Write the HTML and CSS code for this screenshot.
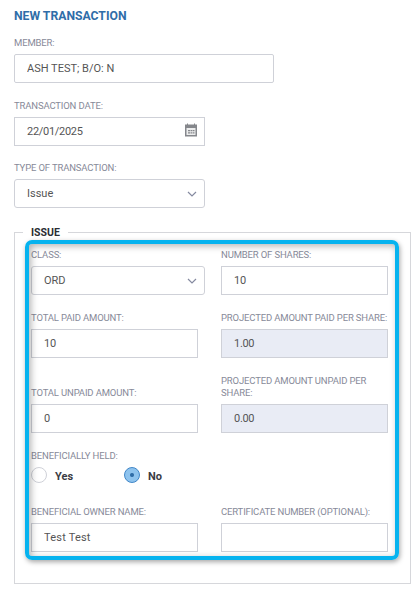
FILE: index.html
```html
<!DOCTYPE html>
<html lang="en">
<head>
	<meta charset="UTF-8">
	<title>New Transaction</title>
	<link rel="stylesheet" href="styles.css">
</head>
<body>
	<form id="box">
		<h3>NEW TRANSACTION</h3>
		<div class="field">
			<label>MEMBER:</label>
			<input class="wide" type="text" value="ASH TEST; B/O: N">
		</div>
		<div class="field">
			<label>TRANSACTION DATE:</label>
			<div class="control short">
				<input class="num" type="text" value="22/01/2025">
				<svg class="cal" width="14" height="14" viewBox="0 0 14 14">
					<path d="M1 1.5h2V0.5h1v1h6V0.5h1v1h2V13.500H1z" fill="#85878c"/>
					<rect x="2.500" y="5" width="9" height="7" fill="#eceded"/>
					<path d="M4 7h2v1.300H4zM6.500 7h2v1.300h-2zM9 7h1.500v1.300H9zM4 9.300h2v1.300H4zM6.500 9.300h2v1.300h-2zM9 9.300h1.500v1.300H9z" fill="#85878c"/>
				</svg>
			</div>
		</div>
		<div class="field">
			<label>TYPE OF TRANSACTION:</label>
			<div class="control short">
				<input class="round" type="text" value="Issue">
				<svg class="arrow" width="10" height="6" viewBox="0 0 10 6"><path d="M1 1l4 4 4-4" fill="none" stroke="#858aa0" stroke-width="1.200"/></svg>
			</div>
		</div>
		<fieldset>
			<legend>ISSUE</legend>
			<div class="grid">
				<div class="cell">
					<label>CLASS:</label>
					<div class="control sel">
						<input class="round" type="text" value="ORD">
						<svg class="arrow" width="10" height="6" viewBox="0 0 10 6"><path d="M1 1l4 4 4-4" fill="none" stroke="#858aa0" stroke-width="1.200"/></svg>
					</div>
				</div>
				<div class="cell">
					<label>NUMBER OF SHARES:</label>
					<input class="num" type="text" value="10">
				</div>
				<div class="cell">
					<label>TOTAL PAID AMOUNT:</label>
					<input class="num" type="text" value="10">
				</div>
				<div class="cell">
					<label>PROJECTED AMOUNT PAID PER SHARE:</label>
					<input class="off num" type="text" value="1.00" readonly>
				</div>
				<div class="cell">
					<label>TOTAL UNPAID AMOUNT:</label>
					<input class="num" type="text" value="0">
				</div>
				<div class="cell">
					<label>PROJECTED AMOUNT UNPAID PER SHARE:</label>
					<input class="off num" type="text" value="0.00" readonly>
				</div>
				<div class="cell full">
					<label>BENEFICIALLY HELD:</label>
					<div class="radios">
						<span class="radio"><i></i><b>Yes</b></span>
						<span class="radio on"><i></i><b>No</b></span>
					</div>
				</div>
				<div class="cell">
					<label>BENEFICIAL OWNER NAME:</label>
					<input class="name" type="text" value="Test Test">
				</div>
				<div class="cell">
					<label>CERTIFICATE NUMBER (OPTIONAL):</label>
					<input type="text" value="">
				</div>
			</div>
			<div class="mark"></div>
		</fieldset>
	</form>
</body>
</html>
```

FILE: styles.css
```css
*{
	margin: 0;
	padding: 0;
	box-sizing: border-box;
}
body{
	background-color: #fff;
	font-family: "Roboto", "Liberation Sans", sans-serif;
}
#box{
	padding: 9px 2px 0 14px;
}
#box h3{
	font-size: 12.200px;
	line-height: 14px;
	font-weight: 700;
	color: #2f6da8;
	margin-bottom: 14px;
}
.field{
	margin-bottom: 16.500px;
}
label{
	display: block;
	font-size: 9.500px;
	line-height: 12px;
	letter-spacing: -.15px;
	color: #878a99;
	margin-bottom: 5px;
}
input{
	display: block;
	width: 100%;
	height: 29px;
	padding: 0 12px;
	border: 1px solid #cfd1d8;
	background-color: #fff;
	font-family: inherit;
	font-size: 11px;
	color: #555;
	outline: none;
}
input.wide{
	width: 260px;
	border-radius: 2px;
}
input.round{
	border-radius: 3px;
}
input.off{
	background-color: #e9ecf5;
}
input.num{
	letter-spacing: -.3px;
}
input.name{
	letter-spacing: .2px;
}
.control{
	position: relative;
}
.short{
	width: 191px;
}
.sel{
	width: 174px;
}
.cal{
	position: absolute;
	right: 7px;
	top: 6px;
}
.arrow{
	position: absolute;
	right: 8px;
	top: 12px;
}
fieldset{
	position: relative;
	margin-top: 18.500px;
	height: 357.500px;
	border: 1px solid #d6d7db;
	padding: 10.500px 22px 0 16px;
}
legend{
	margin-left: -8px;
	padding: 0 8px;
	font-size: 10.500px;
	line-height: 12px;
	font-weight: 700;
	color: #2b2d33;
}
.grid{
	display: grid;
	grid-template-columns: 167px 167px;
	column-gap: 23px;
	row-gap: 17px;
	align-items: end;
}
.full{
	grid-column: 1 / 3;
}
.radios{
	display: flex;
	margin-top: -1px;
	margin-bottom: 6px;
}
.radio{
	display: flex;
	align-items: center;
	width: 93px;
	font-size: 11px;
	color: #3a3c44;
}
.radio b{
	padding-top: 4px;
}
.radio i{
	width: 16px;
	height: 16px;
	margin-right: 8px;
	border: 1px solid #cfd1d8;
	border-radius: 50%;
	background-color: #fff;
}
.radio.on i{
	border-color: #3f86c8;
	background: radial-gradient(circle, #2f6da8 0, #2f6da8 1.500px, #8ec3ee 2.500px);
}
.mark{
	position: absolute;
	left: 10px;
	top: 1px;
	width: 374px;
	height: 320px;
	border: 4px solid #06b3ef;
	border-radius: 7px;
	box-shadow: 1px 2px 5px rgba(0,0,0,.35), inset 2px 2px 7px rgba(0,0,0,.3);
}
```
